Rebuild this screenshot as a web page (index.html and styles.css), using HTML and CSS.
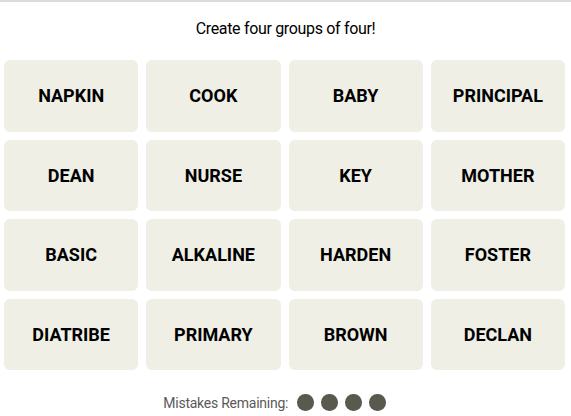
FILE: index.html
```html
<!DOCTYPE html>
<html lang="en">
<head>
<meta charset="utf-8">
<title>Connections</title>
<link rel="stylesheet" href="styles.css">
</head>
<body>
<main class="game">
  <p class="prompt">Create four groups of four!</p>
  <section class="board">
    <button class="tile">NAPKIN</button>
    <button class="tile">COOK</button>
    <button class="tile">BABY</button>
    <button class="tile">PRINCIPAL</button>
    <button class="tile">DEAN</button>
    <button class="tile">NURSE</button>
    <button class="tile">KEY</button>
    <button class="tile">MOTHER</button>
    <button class="tile">BASIC</button>
    <button class="tile">ALKALINE</button>
    <button class="tile">HARDEN</button>
    <button class="tile">FOSTER</button>
    <button class="tile">DIATRIBE</button>
    <button class="tile">PRIMARY</button>
    <button class="tile">BROWN</button>
    <button class="tile">DECLAN</button>
  </section>
  <div class="mistakes">
    <span class="mistakes-label">Mistakes Remaining:</span>
    <span class="dots">
      <span class="dot"></span><span class="dot"></span><span class="dot"></span><span class="dot"></span>
    </span>
  </div>
</main>
</body>
</html>
```

FILE: styles.css
```css
html, body {
  margin: 0;
  padding: 0;
  background: #ffffff;
}

.game {
  border-top: 2px solid #dcdcdc;
  font-family: Roboto, "Liberation Sans", sans-serif;
}

.prompt {
  margin: 17px 0 0;
  text-align: center;
  font-size: 16px;
  line-height: 20px;
  letter-spacing: -0.33px;
  color: #000;
}

.board {
  margin: 21px 6px 0 4px;
  display: grid;
  grid-template-columns: repeat(4, 1fr);
  grid-auto-rows: 71.5px;
  gap: 8px;
}

.tile {
  border: none;
  border-radius: 6px;
  background: #efefe6;
  font-family: Roboto, "Liberation Sans", sans-serif;
  font-weight: 700;
  font-size: 18px;
  color: #000;
  padding: 0;
  text-transform: uppercase;
}

.mistakes {
  margin-top: 24px;
  padding-right: 22px;
  display: flex;
  justify-content: center;
  align-items: center;
  gap: 9px;
  height: 17px;
}

.mistakes-label {
  font-size: 14px;
  letter-spacing: -0.25px;
  color: #5a5a5a;
}

.dots {
  display: flex;
  gap: 7.5px;
}

.dot {
  width: 16.5px;
  height: 16.5px;
  border-radius: 50%;
  background: #5a594e;
}
```
